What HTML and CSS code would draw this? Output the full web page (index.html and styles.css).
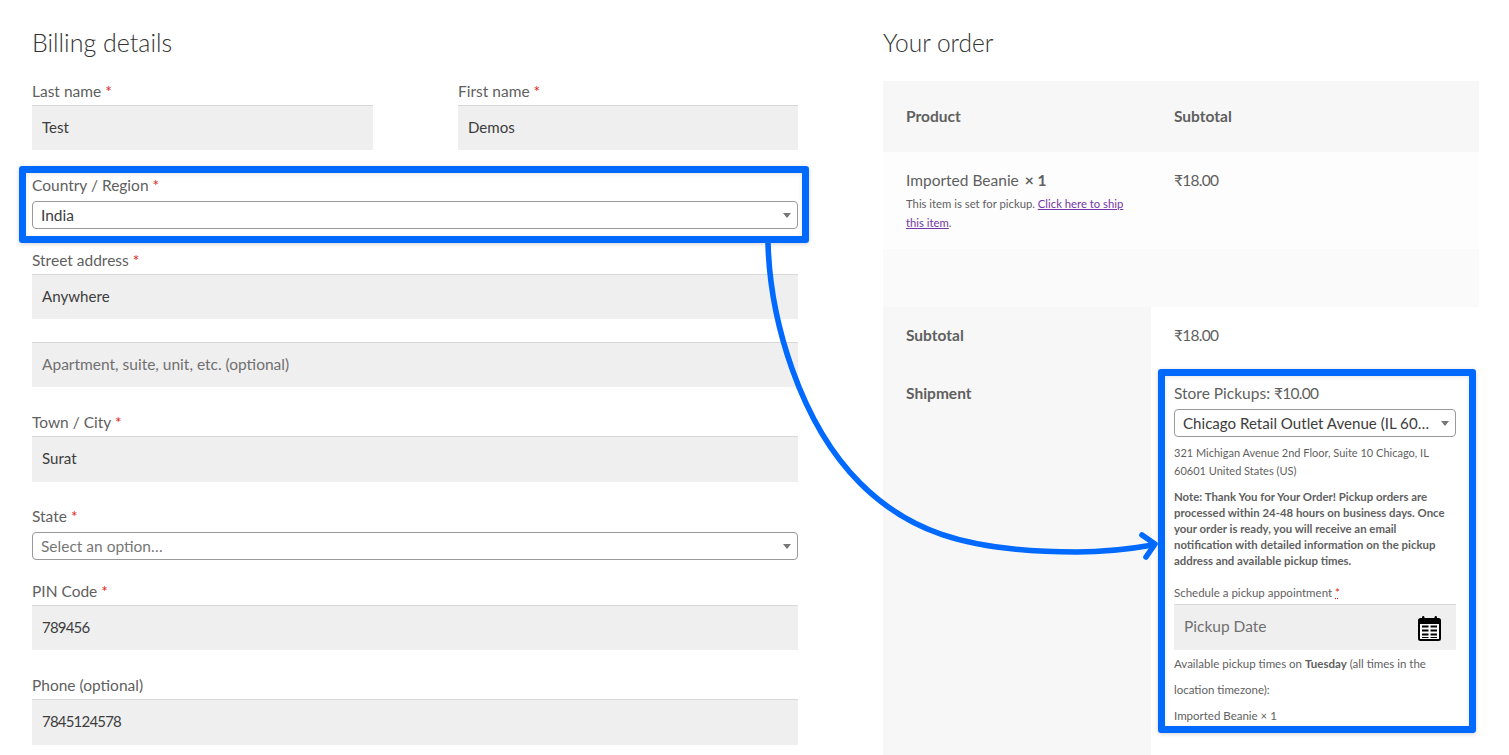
FILE: index.html
```html
<!DOCTYPE html>
<html lang="en">
<head>
<meta charset="utf-8">
<title>Checkout</title>
<link rel="stylesheet" href="styles.css">
</head>
<body>
<div class="page">
  <section class="billing">
    <h3 class="heading">Billing details</h3>
    <div class="name-row">
      <div class="field field-first">
        <div class="label">Last name <span class="req">*</span></div>
        <div class="input">Test</div>
      </div>
      <div class="field field-second">
        <div class="label">First name <span class="req">*</span></div>
        <div class="input">Demos</div>
      </div>
    </div>
    <div class="field field-select">
      <div class="label">Country / Region <span class="req">*</span></div>
      <div class="select"><span class="select-text">India</span><span class="caret"></span></div>
    </div>
    <div class="field">
      <div class="label">Street address <span class="req">*</span></div>
      <div class="input">Anywhere</div>
    </div>
    <div class="field">
      <div class="input input-placeholder">Apartment, suite, unit, etc. (optional)</div>
    </div>
    <div class="field field-tall">
      <div class="label">Town / City <span class="req">*</span></div>
      <div class="input">Surat</div>
    </div>
    <div class="field field-select">
      <div class="label">State <span class="req">*</span></div>
      <div class="select"><span class="select-text select-empty">Select an option…</span><span class="caret"></span></div>
    </div>
    <div class="field">
      <div class="label">PIN Code <span class="req">*</span></div>
      <div class="input input-num">789456</div>
    </div>
    <div class="field field-tall">
      <div class="label">Phone (optional)</div>
      <div class="input input-num">7845124578</div>
    </div>
  </section>

  <section class="order">
    <h3 class="heading heading-order">Your order</h3>
    <div class="order-table">
      <div class="cell head-cell"><strong>Product</strong></div>
      <div class="cell head-cell"><strong>Subtotal</strong></div>
      <div class="cell item-cell">
        <div class="item-name">Imported Beanie <strong class="qty">× 1</strong></div>
        <div class="item-note">This item is set for pickup. <a class="link" href="#">Click here to ship this item</a>.</div>
      </div>
      <div class="cell item-cell"><div class="item-name price">₹18.00</div></div>
      <div class="spacer-row"></div>
      <div class="side-col">
        <div class="side-sub"><strong>Subtotal</strong></div>
        <div class="side-ship"><strong>Shipment</strong></div>
      </div>
      <div class="main-col">
        <div class="main-sub price">₹18.00</div>
        <div class="ship-title">Store Pickups: <span class="price">₹10.00</span></div>
        <div class="select select-store"><span class="select-text">Chicago Retail Outlet Avenue (IL 60…</span><span class="caret"></span></div>
        <p class="address">321 Michigan Avenue 2nd Floor, Suite 10 Chicago, IL 60601 United States (US)</p>
        <p class="note">Note: Thank You for Your Order! Pickup orders are processed within 24-48 hours on business days. Once your order is ready, you will receive an email notification with detailed information on the pickup address and available pickup times.</p>
        <div class="schedule">Schedule a pickup appointment <abbr class="req req-abbr">*</abbr></div>
        <div class="input input-date">
          <span class="date-text">Pickup Date</span>
          <svg class="cal" width="23" height="25" viewBox="0 0 23 25" aria-hidden="true">
            <rect x="1" y="3" width="21" height="21" rx="1.5" fill="#fff" stroke="#000" stroke-width="2"/>
            <rect x="1" y="3" width="21" height="5" fill="#000"/>
            <rect x="4" y="0" width="2.4" height="5" rx="1.2" fill="#000"/>
            <rect x="16.6" y="0" width="2.4" height="5" rx="1.2" fill="#000"/>
            <path d="M4 10.5h6.5M12.5 10.5H19M4 14.5h6.5M12.5 14.5H19M4 18.5h6.5M12.5 18.5H19" stroke="#000" stroke-width="2" fill="none"/>
            <path d="M4 21.5h6.5M12.5 21.5H19" stroke="#000" stroke-width="1" fill="none"/>
          </svg>
        </div>
        <div class="avail avail-first">Available pickup times on <strong>Tuesday</strong> (all times in the location timezone):</div>
        <div class="avail">Imported Beanie × 1</div>
      </div>
    </div>
  </section>

  <div class="callout callout-country"></div>
  <div class="callout callout-store"></div>
  <svg class="arrow" width="1509" height="755" viewBox="0 0 1509 755" aria-hidden="true">
    <path d="M768 243C770 320 800 423 860 483C905 528 960 552 1077 552C1105 552 1130 549 1153 545" fill="none" stroke="#0069ff" stroke-width="5.6"/>
    <path d="M1142 535L1155 544L1146 557" fill="none" stroke="#0069ff" stroke-width="5.6" stroke-linecap="round" stroke-linejoin="round"/>
  </svg>
</div>
</body>
</html>
```
FILE: styles.css
```css
* { box-sizing: border-box; }
html, body { margin: 0; padding: 0; background: #fff; }
body {
  font-family: "Lato", "Liberation Sans", sans-serif;
  font-size: 15.5px;
  color: #5f5f5f;
  overflow: hidden;
}
.page {
  position: relative;
  width: 1509px;
  height: 755px;
  overflow: hidden;
  display: flex;
  padding-left: 32px;
}
.billing { width: 766px; flex: none; }
.order { width: 596px; flex: none; margin-left: 85px; }
.heading {
  margin: 25px 0 0;
  height: 54px;
  line-height: 34px;
  font-size: 25px;
  font-weight: 300;
  color: #333;
}
.heading-order { height: 56px; line-height: 36px; font-size: 24.5px; }
.name-row {
  display: flex;
  justify-content: space-between;
}
.field-first { width: 341px; }
.field-second { width: 340px; }
.field { margin-bottom: 23px; }
.field-select { margin-bottom: 19px; }
.field-tall .input { height: 46px; }
.field-tall { margin-bottom: 22px; }
.label {
  height: 24px;
  line-height: 24px;
  margin-bottom: 2px;
  white-space: nowrap;
}
.field-select .label { margin-bottom: 4px; }
.req { color: #e2231a; text-decoration: none; }
.input {
  height: 45px;
  line-height: 42px;
  padding: 0 10px;
  background: #efefef;
  border-top: 1px solid #d8d8d8;
  color: #3d3d3d;
  font-size: 15.1px;
}
.input-placeholder { color: #6f6f6f; font-size: 15.5px; }
.input-num { font-size: 15px; letter-spacing: -.8px; }
.price { letter-spacing: -.7px; }
.select {
  height: 28px;
  display: flex;
  align-items: center;
  justify-content: space-between;
  padding: 0 6px 0 8px;
  background: #fff;
  border: 1px solid #999;
  border-radius: 4px;
  color: #3d3d3d;
}
.select-text { white-space: nowrap; }
.select-empty { color: #777; }
.caret {
  width: 0;
  height: 0;
  border-left: 4px solid transparent;
  border-right: 4px solid transparent;
  border-top: 5px solid #777;
  flex: none;
}
.order-table {
  display: grid;
  grid-template-columns: 268px 328px;
  grid-template-rows: 71px 97px 58px 448px;
}
.cell { padding: 0 23px; }
.head-cell {
  background: #f7f7f7;
  line-height: 71px;
}
.item-cell {
  background: #fdfdfd;
  padding-top: 16px;
}
.item-name { line-height: 24px; }
.qty { font-weight: 700; margin-left: 2px; }
.item-note {
  font-size: 11.3px;
  line-height: 19px;
  margin-top: 2px;
}
.link { color: #7238a8; text-decoration: underline; }
.spacer-row { grid-column: 1 / 3; background: #fafafa; }
.side-col { background: #f7f7f7; padding: 0 23px; }
.side-sub { padding-top: 16px; height: 74px; line-height: 24px; }
.side-ship { line-height: 24px; }
.main-col { padding: 0 23px; }
.main-sub { padding-top: 16px; height: 74px; line-height: 24px; }
.ship-title { line-height: 24px; height: 28px; }
.select-store { width: 282px; height: 28px; }
.select-store .select-text { font-size: 15.1px; }
.address {
  margin: 7px 0 0;
  width: 282px;
  font-size: 11px;
  line-height: 18px;
}
.note {
  margin: 9px 0 0;
  width: 282px;
  font-size: 11.4px;
  line-height: 16px;
  font-weight: 700;
}
.schedule {
  margin-top: 16px;
  height: 19px;
  font-size: 11.5px;
  line-height: 16px;
}
.req-abbr { text-decoration: underline dotted; }
.input-date {
  width: 282px;
  height: 46px;
  display: flex;
  align-items: center;
  justify-content: space-between;
  padding: 0 15px 0 10px;
  color: #6f6f6f;
  line-height: normal;
  font-size: 15.5px;
}
.date-text { margin-bottom: 3px; }
.cal { flex: none; display: block; margin-top: 2px; }
.avail {
  width: 282px;
  font-size: 11.5px;
  line-height: 26px;
}
.avail-first { margin-top: 1px; }
.callout {
  position: absolute;
  border: 7px solid #0069ff;
  border-radius: 3px;
  box-shadow: 0 1px 4px rgba(0,0,0,.18), inset 0 1px 4px rgba(0,0,0,.1);
  pointer-events: none;
}
.callout-country { left: 19px; top: 166px; width: 790px; height: 77px; }
.callout-store { left: 1158px; top: 369px; width: 318px; height: 364px; }
.arrow { position: absolute; left: 0; top: 0; pointer-events: none; }
```
